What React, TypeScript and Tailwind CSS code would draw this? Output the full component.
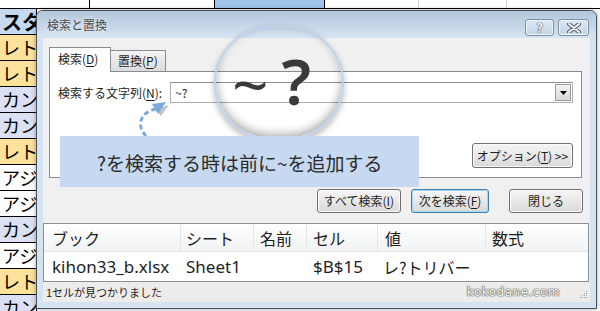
import React from 'react';

const jp = "font-['Noto_Sans_CJK_JP','Noto_Sans',sans-serif]";

const sheetRows = [
    { t: 'レト', bg: 'bg-[#fde29b]' },
    { t: 'レト', bg: 'bg-[#fde29b]' },
    { t: 'カン', bg: 'bg-[#dbe1f3]' },
    { t: 'カン', bg: 'bg-[#dbe1f3]' },
    { t: 'レト', bg: 'bg-[#fde29b]' },
    { t: 'アジ', bg: 'bg-white' },
    { t: 'アジ', bg: 'bg-white' },
    { t: 'カン', bg: 'bg-[#dbe1f3]' },
    { t: 'アジ', bg: 'bg-white' },
    { t: 'レト', bg: 'bg-[#fde29b]' },
    { t: 'カン', bg: 'bg-[#dbe1f3]' },
];

function U({ children }: { children: React.ReactNode }) {
    return <span className="underline underline-offset-2">{children}</span>;
}

function Btn({ children, focus, className }: { children: React.ReactNode; focus?: boolean; className?: string }) {
    return (
        <div
            className={`flex items-center justify-center rounded-[3px] border bg-linear-to-b from-[#f5f5f5] via-[#e8e8e8] to-[#d9d9d9] text-[12px] text-[#1e1e1e] ${
                focus ? 'border-[#3c7fb1] shadow-[inset_0_0_0_1px_#a9d6f5]' : 'border-[#707070] shadow-[inset_0_0_0_1px_#fbfbfb]'
            } ${className ?? ''}`}
        >
            {children}
        </div>
    );
}

export default function App() {
    return (
        <div className={`relative w-[600px] h-[311px] overflow-hidden bg-white ${jp}`}>
            {/* spreadsheet behind the dialog */}
            <div className="flex flex-col">
                <div className="h-[9px] flex border-b border-black">
                    <div className="w-[90px] border-r border-black" />
                    <div className="w-[125px] border-r border-black" />
                    <div className="w-[110px] bg-[#9fc5e8] border-r border-black" />
                    <div className="w-[94px] border-r border-[#d4d4d4]" />
                    <div className="w-[88px] border-r border-[#d4d4d4]" />
                </div>
                <div className="h-[26px] w-[37px] border-b border-r border-black bg-[#c6d9f0] pl-[2px] text-[20px] font-bold leading-[25px] text-black overflow-hidden whitespace-nowrap">
                    スタ
                </div>
                {sheetRows.map((r, i) => (
                    <div
                        key={i}
                        className={`h-[26px] w-[37px] border-b border-r border-black ${r.bg} pl-[2px] text-[18px] leading-[25px] text-black overflow-hidden whitespace-nowrap`}
                    >
                        {r.t}
                    </div>
                ))}
            </div>

            {/* dialog window */}
            <div className="absolute left-[36px] top-[10px] w-[561px] h-[299px] rounded-t-[7px] border border-[#46505d] bg-[#d5e2f0] flex flex-col shadow-[0_0_5px_rgba(0,0,0,0.35)]">
                <div className="h-[27px] shrink-0 flex items-start rounded-t-[6px] bg-linear-to-b from-[#b2c6db] to-[#d7e4f2] pl-[10px] pr-[7px]">
                    <span className="mt-[7px] text-[12px] leading-[14px] text-[#4b4b4b] [text-shadow:0_0_4px_#ffffff]">検索と置換</span>
                    <div className="ml-auto mt-[8px] flex gap-[4px]">
                        <div className="w-[29px] h-[17px] rounded-[3px] border border-[#7d8ea3] bg-linear-to-b from-[#dce7f3] to-[#c3d4e7] shadow-[inset_0_0_0_1px_#eef4fa] flex items-center justify-center">
                            <span className="text-[13px] font-bold leading-none text-[#eef3f8] [text-shadow:0_0_1px_#4d5866,0_0_1px_#4d5866,0_0_1px_#4d5866]">?</span>
                        </div>
                        <div className="w-[31px] h-[17px] rounded-[3px] border border-[#7d8ea3] bg-linear-to-b from-[#dce7f3] to-[#c3d4e7] shadow-[inset_0_0_0_1px_#eef4fa] flex items-center justify-center">
                            <svg width="14" height="10" viewBox="0 0 14 10">
                                <path d="M2 1 L12 9 M12 1 L2 9" stroke="#55606d" strokeWidth="4" strokeLinecap="round" />
                                <path d="M2 1 L12 9 M12 1 L2 9" stroke="#eef3f8" strokeWidth="2" strokeLinecap="round" />
                            </svg>
                        </div>
                    </div>
                </div>

                <div className="flex-1 mx-[6px] mb-[6px] bg-[#f0f0f0] flex flex-col">
                    {/* tabs */}
                    <div className="mt-[9px] ml-[6px] h-[24px] flex items-end">
                        <div className="relative z-10 -mb-px w-[62px] h-[25px] border border-b-0 border-[#898c95] bg-white pl-[8px] pt-[4px] text-[12px] leading-[14px] text-[#1e1e1e]">
                            検索(<U>D</U>)
                        </div>
                        <div className="w-[55px] h-[21px] border border-l-0 border-b-0 border-[#898c95] bg-linear-to-b from-[#f3f3f3] to-[#dcdcdc] pl-[7px] pt-[3px] text-[12px] leading-[14px] text-[#1e1e1e]">
                            置換(<U>P</U>)
                        </div>
                    </div>

                    {/* tab panel */}
                    <div className="ml-[6px] mr-[8px] h-[107px] border border-[#898c95] bg-white flex flex-col pl-[8px] pr-[8px]">
                        <div className="mt-[10px] flex items-center">
                            <span className="text-[12px] text-[#1e1e1e]">
                                検索する文字列(<U>N</U>):
                            </span>
                            <div className="ml-auto w-[403px] h-[21px] border border-[#abadb3] border-t-[#8e8f8f] flex items-center pl-[4px] pr-[1px]">
                                <span className="text-[12px] text-[#1e1e1e]">~?</span>
                                <div className="ml-auto w-[16px] h-[17px] border border-[#9a9a9a] bg-linear-to-b from-[#f4f4f4] to-[#d8d8d8] flex items-center justify-center">
                                    <svg width="7" height="4" viewBox="0 0 7 4">
                                        <path d="M0 0 H7 L3.5 4 Z" fill="#000" />
                                    </svg>
                                </div>
                            </div>
                        </div>
                        <div className="mt-[40px] flex justify-end">
                            <Btn className="w-[101px] h-[25px] text-[11px]">
                                オプション(<U>T</U>) &gt;&gt;
                            </Btn>
                        </div>
                    </div>

                    {/* action buttons */}
                    <div className="mt-[11px] h-[24px] flex justify-end pr-[7px]">
                        <Btn className="w-[84px] h-[24px]">
                            すべて検索(<U>I</U>)
                        </Btn>
                        <Btn focus className="ml-[10px] w-[78px] h-[24px]">
                            次を検索(<U>F</U>)
                        </Btn>
                        <Btn className="ml-[20px] w-[74px] h-[24px]">閉じる</Btn>
                    </div>

                    {/* results list */}
                    <div className="mt-[10px] mr-[1px] h-[59px] border border-[#8e8f8f] bg-white flex flex-col text-[16px] text-[#1e1e1e]">
                        <div className="h-[28px] grid grid-cols-[137px_73px_53px_71px_108px_1fr] bg-linear-to-b from-white to-[#f1f2f4] border-b border-[#e5e5e5]">
                            <div className="pl-[8px] leading-[28px] border-r border-[#e5e5e5]">ブック</div>
                            <div className="pl-[5px] leading-[28px] border-r border-[#e5e5e5]">シート</div>
                            <div className="pl-[6px] leading-[28px] border-r border-[#e5e5e5]">名前</div>
                            <div className="pl-[6px] leading-[28px] border-r border-[#e5e5e5]">セル</div>
                            <div className="pl-[7px] leading-[28px] border-r border-[#e5e5e5]">値</div>
                            <div className="pl-[6px] leading-[28px]">数式</div>
                        </div>
                        <div className="flex-1 grid grid-cols-[137px_73px_53px_71px_108px_1fr] items-center">
                            <div className="pl-[8px] font-['Noto_Sans',sans-serif] text-[17px]">kihon33_b.xlsx</div>
                            <div className="pl-[5px] font-['Noto_Sans',sans-serif] text-[17px]">Sheet1</div>
                            <div />
                            <div className="pl-[6px] font-['Noto_Sans',sans-serif] text-[17px]">$B$15</div>
                            <div className="pl-[5px]">レ?トリバー</div>
                            <div />
                        </div>
                    </div>

                    {/* status bar */}
                    <div className="h-[20px] flex items-center bg-[#eeecea] pl-[3px] pr-[2px]">
                        <span className="text-[11px] text-[#1e1e1e]">1セルが見つかりました</span>
                        <span className="ml-auto mr-[20px] font-['DejaVu_Sans',sans-serif] text-[12px] tracking-[0.5px] text-white [text-shadow:0_0_1px_#444,0_0_1px_#444,0_0_2px_#777]">
                            kokodane.com
                        </span>
                        <svg width="8" height="8" viewBox="0 0 8 8" className="mt-[6px]">
                            <g fill="#a0a0a0">
                                <rect x="6" y="0" width="1" height="1" />
                                <rect x="4" y="2" width="1" height="1" />
                                <rect x="6" y="2" width="1" height="1" />
                                <rect x="2" y="4" width="1" height="1" />
                                <rect x="4" y="4" width="1" height="1" />
                                <rect x="6" y="4" width="1" height="1" />
                                <rect x="0" y="6" width="1" height="1" />
                                <rect x="2" y="6" width="1" height="1" />
                                <rect x="4" y="6" width="1" height="1" />
                                <rect x="6" y="6" width="1" height="1" />
                            </g>
                        </svg>
                    </div>
                </div>
            </div>

            {/* magnifier */}
            <div className="absolute left-[214px] top-[26px] w-[130px] h-[114px] rounded-full border-2 border-[#bdd2ec] shadow-[inset_0_-4px_10px_rgba(0,0,0,0.32),0_3px_6px_rgba(0,0,0,0.28)]" />
            <div className="absolute left-[232px] top-[46px] flex items-center gap-[13px] font-['Noto_Sans',sans-serif] text-[64px] leading-none text-[#3a3a3a]">
                <span className="mt-[6px]">~</span>
                <span className="font-semibold">?</span>
            </div>

            {/* curved dashed arrow */}
            <svg className="absolute left-[128px] top-[96px]" width="50" height="46" viewBox="0 0 50 46">
                <path d="M24 10 L38 6 L30 17 Z" fill="#555" opacity="0.35" transform="translate(3 3)" />
                <path d="M18 40 C 8 30, 12 16, 28 13" fill="none" stroke="#7ea9dd" strokeWidth="3" strokeDasharray="5 3" />
                <path d="M24 8 L38 6 L30 18 Z" fill="#7ea9dd" />
            </svg>

            {/* callout */}
            <div className="absolute left-[60px] top-[136px] w-[359px] h-[51px] bg-[#c6d9f0] pl-[37px] pt-[14px] text-[19px] leading-[26px] text-[#2b2b2b]">
                ?を検索する時は前に~を追加する
            </div>
        </div>
    );
}
